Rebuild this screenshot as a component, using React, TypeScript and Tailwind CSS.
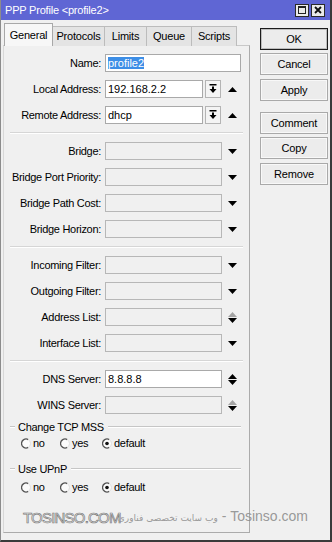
import React from 'react';

type Kind = 'white' | 'off';

function DownArrow({ color = '#000' }: { color?: string }) {
  return (
    <svg width="9" height="5" viewBox="0 0 9 5">
      <polygon points="0,0 9,0 4.5,5" fill={color} />
    </svg>
  );
}

function UpArrow({ color = '#000' }: { color?: string }) {
  return (
    <svg width="9" height="5" viewBox="0 0 9 5">
      <polygon points="0,5 9,5 4.5,0" fill={color} />
    </svg>
  );
}

function UpDown({ up = '#000' }: { up?: string }) {
  return (
    <div className="flex flex-col items-center gap-[1px]">
      <UpArrow color={up} />
      <DownArrow />
    </div>
  );
}

function PickButton() {
  return (
    <div className="ml-[2px] flex h-[18px] w-[16px] items-center justify-center border border-[#b4b4b4] bg-[#f4f4f4]">
      <svg width="8" height="10" viewBox="0 0 8 10">
        <rect x="0.5" y="0" width="7" height="1.5" fill="#000" />
        <rect x="3" y="2.5" width="2" height="3" fill="#000" />
        <polygon points="0.5,5 7.5,5 4,9" fill="#000" />
      </svg>
    </div>
  );
}

function Field({ w, kind = 'white', children }: { w: number; kind?: Kind; children?: React.ReactNode }) {
  return (
    <div
      className={
        kind === 'white'
          ? 'h-[18px] border border-[#a9a9a9] bg-white pl-[2px] text-[11px] leading-[16px] text-black'
          : 'h-[18px] border border-[#b7b7b7] bg-[#f0f0f0] pl-[2px] text-[11px] leading-[16px]'
      }
      style={{ width: w }}
    >
      {children}
    </div>
  );
}

function Row({ label, children }: { label: string; children: React.ReactNode }) {
  return (
    <div className="flex h-[18px] items-center">
      <div className="w-[97px] text-right text-[11px] tracking-[-0.3px] text-black">{label}</div>
      <div className="ml-[4px] flex items-center">{children}</div>
    </div>
  );
}

function Sep() {
  return <div className="ml-[6px] h-[2px] w-[233px] border-t border-[#d6d6d6] border-b border-b-white" />;
}

function Radio({ on }: { on?: boolean }) {
  return (
    <svg width="10" height="11" viewBox="0 0 10 11">
      <circle cx="5" cy="5.5" r="4.5" fill="#fbfbfb" />
      <path d="M7.25 1.6 A4.5 4.5 0 1 0 7.25 9.4" fill="none" stroke="#555" strokeWidth="1.3" />
      <path d="M7.25 1.6 A4.5 4.5 0 0 1 7.25 9.4" fill="none" stroke="#dedede" strokeWidth="1" />
      {on && <circle cx="5" cy="5.5" r="1.8" fill="#111" />}
    </svg>
  );
}

function RadioRow() {
  return (
    <div className="ml-[17px] flex h-[14px] items-center text-[11px] tracking-[-0.3px] text-black">
      <div className="flex w-[39px] items-center gap-[2px]">
        <Radio />
        <span>no</span>
      </div>
      <div className="flex w-[42px] items-center gap-[2px]">
        <Radio />
        <span>yes</span>
      </div>
      <div className="flex items-center gap-[2px]">
        <Radio on />
        <span>default</span>
      </div>
    </div>
  );
}

function Group({ title }: { title: string }) {
  return (
    <div className="flex h-[14px] items-center text-[11px] tracking-[-0.3px] text-black">
      <div className="ml-[6px] h-[2px] w-[5px] border-t border-[#c6c6c6] border-b border-b-white" />
      <span className="ml-[3px]">{title}</span>
      <div className="ml-[4px] mr-[8px] h-[2px] flex-1 border-t border-[#c6c6c6] border-b border-b-white" />
    </div>
  );
}

function Btn({ label, main, className = '' }: { label: string; main?: boolean; className?: string }) {
  return (
    <div
      className={
        'flex h-[22px] w-[68px] items-center justify-center text-[11px] tracking-[-0.2px] text-black ' +
        (main
          ? 'border border-[#1c1c1c] bg-[#ececec] shadow-[inset_0_0_0_1px_#bdbdbd] '
          : 'border border-[#a9a9a9] bg-[#ececec] shadow-[inset_0_0_0_1px_#f8f8f8] ') +
        className
      }
    >
      {label}
    </div>
  );
}

const tabs = ['Protocols', 'Limits', 'Queue', 'Scripts'];
const tabW = ['w-[52px]', 'w-[42px]', 'w-[45px]', 'w-[45px]'];

export default function App() {
  return (
    <div className="relative h-[542px] w-[332px] overflow-hidden border-b-2 border-l border-r-2 border-[#3a3a3a] border-l-[#8c8c8c] bg-[#f0f0f0] font-['Liberation_Sans',Arial,sans-serif]">
      {/* title bar */}
      <div className="flex h-[20px] items-center bg-[#5f66d4] pl-[4px] pr-[5px]">
        <span className="flex-1 text-[11px] tracking-[-0.2px] text-white">PPP Profile &lt;profile2&gt;</span>
        <div className="flex h-[13px] w-[14px] items-center justify-center border border-[#2a2a2a] bg-[#eaeaea]">
          <svg width="8" height="8" viewBox="0 0 8 8">
            <rect x="0.5" y="0.5" width="7" height="7" fill="none" stroke="#222" />
            <rect x="0.5" y="0.5" width="7" height="1.5" fill="#222" />
          </svg>
        </div>
        <div className="ml-[2px] flex h-[13px] w-[14px] items-center justify-center border border-[#2a2a2a] bg-[#eaeaea]">
          <svg width="8" height="8" viewBox="0 0 8 8">
            <path d="M1 1 L7 7 M7 1 L1 7" stroke="#111" strokeWidth="1.8" />
          </svg>
        </div>
      </div>

      <div className="flex pl-[2px] pt-[3px]">
        {/* left: tabs + panel */}
        <div className="w-[247px]">
          <div className="flex h-[23px] items-end pl-[1px]">
            <div className="relative z-10 flex h-[23px] w-[49px] items-center justify-center border border-b-0 border-[#a8a8a8] bg-[#f7f7f7] text-[11px] tracking-[-0.2px] text-black">
              General
            </div>
            {tabs.map((t, i) => (
              <div
                key={t}
                className={
                  'flex h-[20px] items-center justify-center border border-b-0 border-l-0 border-[#bcbcbc] bg-[#e4e4e4] text-[11px] tracking-[-0.2px] text-black ' +
                  tabW[i]
                }
              >
                {t}
              </div>
            ))}
          </div>
          <div className="-mt-px h-[488px] border border-[#ababab] border-l-[#d8d8d8] border-t-[#c8c8c8] bg-[#f0f0f0] pt-[8px]">
            <div className="flex flex-col gap-[8px]">
              <Row label="Name:">
                <Field w={136}>
                  <span className="bg-[#3d8ee6] text-white">profile2</span>
                </Field>
              </Row>
              <Row label="Local Address:">
                <Field w={98}>192.168.2.2</Field>
                <PickButton />
                <div className="ml-[7px]">
                  <UpArrow />
                </div>
              </Row>
              <Row label="Remote Address:">
                <Field w={98}>dhcp</Field>
                <PickButton />
                <div className="ml-[7px]">
                  <UpArrow />
                </div>
              </Row>
              <Sep />
              {['Bridge:', 'Bridge Port Priority:', 'Bridge Path Cost:', 'Bridge Horizon:'].map(l => (
                <Row key={l} label={l}>
                  <Field w={117} kind="off" />
                  <div className="ml-[6px]">
                    <DownArrow />
                  </div>
                </Row>
              ))}
              <Sep />
              <Row label="Incoming Filter:">
                <Field w={117} kind="off" />
                <div className="ml-[6px]">
                  <DownArrow />
                </div>
              </Row>
              <Row label="Outgoing Filter:">
                <Field w={117} kind="off" />
                <div className="ml-[6px]">
                  <DownArrow />
                </div>
              </Row>
              <Row label="Address List:">
                <Field w={117} kind="off" />
                <div className="ml-[6px]">
                  <UpDown up="#a4a4a4" />
                </div>
              </Row>
              <Row label="Interface List:">
                <Field w={117} kind="off" />
                <div className="ml-[6px]">
                  <DownArrow />
                </div>
              </Row>
              <Sep />
              <Row label="DNS Server:">
                <Field w={117}>8.8.8.8</Field>
                <div className="ml-[6px]">
                  <UpDown />
                </div>
              </Row>
              <Row label="WINS Server:">
                <Field w={117} kind="off" />
                <div className="ml-[6px]">
                  <UpDown up="#a4a4a4" />
                </div>
              </Row>
            </div>
            <div className="mt-[6px]">
              <Group title="Change TCP MSS" />
            </div>
            <div className="mt-[2px]">
              <RadioRow />
            </div>
            <div className="mt-[12px]">
              <Group title="Use UPnP" />
            </div>
            <div className="mt-[4px]">
              <RadioRow />
            </div>
          </div>
        </div>

        {/* right: buttons */}
        <div className="ml-[10px] flex flex-col pt-[5px]">
          <Btn label="OK" main />
          <Btn label="Cancel" className="mt-[3px]" />
          <Btn label="Apply" className="mt-[4px]" />
          <Btn label="Comment" className="mt-[11px]" />
          <Btn label="Copy" className="mt-[3px]" />
          <Btn label="Remove" className="mt-[4px]" />
        </div>
      </div>

      {/* watermark */}
      <div className="absolute left-[22px] top-[507px] text-[15px] tracking-[-0.8px] text-[#fafafa]/90 [-webkit-text-stroke:0.7px_#7a7a7a]">
        TOSINSO.COM
      </div>
      <div
        dir="ltr"
        className="absolute right-[22px] top-[506px] text-[14px] text-[#8e8e8e]/90 font-['DejaVu_Sans','Liberation_Sans',sans-serif]"
      >
        <span className="text-[9px]">وب سایت تخصصی فناوری</span>
        <span className="font-['Liberation_Sans',Arial,sans-serif]"> - Tosinso.com</span>
      </div>
    </div>
  );
}
